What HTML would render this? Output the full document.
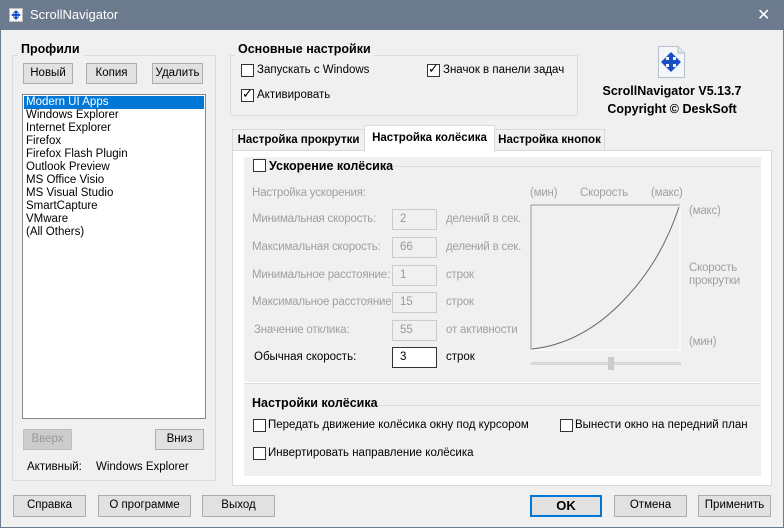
<!DOCTYPE html>
<html><head><meta charset="utf-8"><style>
*{margin:0;padding:0;box-sizing:border-box}
body{width:784px;height:528px;background:#f0f0f0;font-family:"Liberation Sans",sans-serif;font-size:11.5px;color:#000;position:relative;overflow:hidden}
.a{position:absolute;white-space:nowrap}
.b{position:absolute;background:#e1e1e1;border:1px solid #adadad;text-align:center;line-height:19px;font-size:11.5px}
.g{color:#a0a0a0;letter-spacing:-0.2px}
.cb{position:absolute;width:13px;height:13px;border:1px solid #333;background:#fff}
.inp{position:absolute;width:45px;height:21px;border:1px solid #ccc;background:#f0f0f0;color:#999;padding-left:7px;line-height:19px}
.bold{font-weight:bold}
.gl{position:absolute;height:1px;background:#dcdcdc}
</style></head><body>
<div class="a" style="left:0;top:0;width:784px;height:30px;background:#6b7a8c"></div>
<div class="a" style="left:0;top:0;width:784px;height:528px;border:1px solid #6b7a8c"></div>
<svg class="a" style="left:9px;top:8px" width="14" height="14"><rect x="0.5" y="0.5" width="13" height="13" fill="#fff" stroke="#bbb"/><path d="M7 2L10 5H8V6H9V5L12 7L9 9V8H8V9H10L7 12L4 9H6V8H5V9L2 7L5 5V6H6V5H4Z" fill="#1a52c8"/></svg>
<div class="a" style="left:30px;top:7px;color:#fff;font-size:13px">ScrollNavigator</div>
<div class="a" style="left:757px;top:5px;color:#fff;font-size:16px">✕</div>

<!-- Profiles -->
<div class="a" style="left:12px;top:55px;width:204px;height:426px;border:1px solid #dcdcdc"></div>
<div class="a bold" style="left:18px;top:42px;background:#f0f0f0;padding:0 3px;font-size:12.5px">Профили</div>
<div class="b" style="left:23px;top:63px;width:50px;height:21px">Новый</div>
<div class="b" style="left:86px;top:63px;width:51px;height:21px">Копия</div>
<div class="b" style="left:152px;top:63px;width:51px;height:21px">Удалить</div>
<div class="a" style="left:22px;top:94px;width:184px;height:325px;background:#fff;border:1px solid #828790"></div>
<div class="a" style="left:24px;top:96px;width:180px;height:13px;background:#0078d7"></div>
<div class="a" style="left:26px;top:96px;font-size:11.5px;line-height:13px">
<div style="color:#fff">Modern UI Apps</div><div>Windows Explorer</div><div>Internet Explorer</div><div>Firefox</div><div>Firefox Flash Plugin</div><div>Outlook Preview</div><div>MS Office Visio</div><div>MS Visual Studio</div><div>SmartCapture</div><div>VMware</div><div>(All Others)</div></div>
<div class="b" style="left:23px;top:429px;width:49px;height:21px;background:#ccc;border-color:#bfbfbf;color:#999">Вверх</div>
<div class="b" style="left:155px;top:429px;width:49px;height:21px">Вниз</div>
<div class="a" style="left:27px;top:461px">Активный:</div>
<div class="a" style="left:96px;top:461px">Windows Explorer</div>

<!-- bottom buttons -->
<div class="b" style="left:13px;top:495px;width:73px;height:22px">Справка</div>
<div class="b" style="left:98px;top:495px;width:93px;height:22px">О программе</div>
<div class="b" style="left:202px;top:495px;width:73px;height:22px">Выход</div>
<div class="b bold" style="left:530px;top:495px;width:72px;height:22px;border:2px solid #0078d7;line-height:18px;font-size:13px">OK</div>
<div class="b" style="left:614px;top:495px;width:73px;height:22px">Отмена</div>
<div class="b" style="left:698px;top:495px;width:73px;height:22px">Применить</div>

<!-- main settings -->
<div class="a" style="left:230px;top:55px;width:348px;height:61px;border:1px solid #dcdcdc"></div>
<div class="a bold" style="left:235px;top:42px;background:#f0f0f0;padding:0 3px;font-size:12.5px">Основные настройки</div>
<div class="cb" style="left:241px;top:64px"></div><div class="a" style="left:257px;top:64px">Запускать с Windows</div>
<div class="cb" style="left:241px;top:89px"></div><div class="a" style="left:242px;top:86px;font-size:13px">✓</div><div class="a" style="left:257px;top:89px">Активировать</div>
<div class="cb" style="left:427px;top:64px"></div><div class="a" style="left:428px;top:61px;font-size:13px">✓</div><div class="a" style="left:443px;top:64px">Значок в панели задач</div>

<!-- logo -->
<svg class="a" style="left:656px;top:46px" width="30" height="32"><path d="M2.5 0.5H22L28.5 7V31.5H2.5Z" fill="#f4f6fb" stroke="#b8bfcc"/><path d="M22 0.5V7H28.5" fill="#e0e4ec" stroke="#b8bfcc"/><path d="M15 6L20 11H17V14H20V11L25 16L20 21V18H17V21H20L15 26L10 21H13V18H10V21L5 16L10 11V14H13V11H10Z" fill="#1a4fc4"/></svg>
<div class="a bold" style="left:566px;top:82px;width:212px;text-align:center;line-height:18px;font-size:12.5px">ScrollNavigator V5.13.7<br>Copyright © DeskSoft</div>

<!-- tabs -->
<div class="a" style="left:232px;top:150px;width:540px;height:336px;background:#fff;border:1px solid #d9d9d9"></div>
<div class="a bold" style="left:232px;top:129px;width:133px;height:22px;border:1px solid #d9d9d9;border-bottom:none;line-height:21px;text-align:center">Настройка прокрутки</div>
<div class="a" style="left:364px;top:125px;width:131px;height:27px;background:#fff;border:1px solid #d9d9d9;border-bottom:none;line-height:24px;text-align:center;font-weight:bold">Настройка колёсика</div>
<div class="a bold" style="left:494px;top:129px;width:111px;height:22px;border:1px solid #d9d9d9;border-bottom:none;line-height:21px;text-align:center">Настройка кнопок</div>

<div class="a" style="left:244px;top:157px;width:517px;height:225px;background:#f0f0f0"></div>
<div class="a" style="left:244px;top:383px;width:517px;height:93px;background:#f0f0f0;border-top:1px solid #dcdcdc"></div>
<div class="gl" style="left:375px;top:166px;width:386px"></div>
<div class="cb" style="left:253px;top:159px"></div>
<div class="a bold" style="left:269px;top:159px;font-size:12.5px">Ускорение колёсика</div>
<div class="a g" style="left:252px;top:187px">Настройка ускорения:</div>
<div class="a g" style="left:252px;top:213px">Минимальная скорость:</div>
<div class="a g" style="left:252px;top:241px">Максимальная скорость:</div>
<div class="a g" style="left:252px;top:269px">Минимальное расстояние:</div>
<div class="a g" style="left:252px;top:296px">Максимальное расстояние:</div>
<div class="a g" style="left:254px;top:324px">Значение отклика:</div>
<div class="a" style="left:254px;top:351px">Обычная скорость:</div>
<div class="inp" style="left:392px;top:209px">2</div>
<div class="inp" style="left:392px;top:237px">66</div>
<div class="inp" style="left:392px;top:265px">1</div>
<div class="inp" style="left:392px;top:292px">15</div>
<div class="inp" style="left:392px;top:320px">55</div>
<div class="inp" style="left:392px;top:347px;background:#fff;border-color:#333;color:#000">3</div>
<div class="a g" style="left:446px;top:213px">делений в сек.</div>
<div class="a g" style="left:446px;top:241px">делений в сек.</div>
<div class="a g" style="left:446px;top:269px">строк</div>
<div class="a g" style="left:446px;top:296px">строк</div>
<div class="a g" style="left:446px;top:324px">от активности</div>
<div class="a" style="left:446px;top:351px">строк</div>

<div class="a g" style="left:530px;top:187px">(мин)</div>
<div class="a g" style="left:580px;top:187px">Скорость</div>
<div class="a g" style="left:651px;top:187px">(макс)</div>
<div class="a g" style="left:689px;top:205px">(макс)</div>
<div class="a g" style="left:689px;top:262px;line-height:13px">Скорость<br>прокрутки</div>
<div class="a g" style="left:689px;top:336px">(мин)</div>
<svg class="a" style="left:530px;top:204px" width="152" height="148"><rect x="1" y="1" width="149" height="145" fill="none" stroke="#fff"/><path d="M1 1V146M1 1H150" stroke="#999"/><path d="M2 145C30 142 60 130 90 100C115 75 135 45 149 3" fill="none" stroke="#666"/></svg>
<div class="a" style="left:531px;top:362px;width:150px;height:3px;background:#e0e0e0;border:1px solid #d4d4d4"></div>
<div class="a" style="left:608px;top:357px;width:6px;height:13px;background:#ccc"></div>

<div class="gl" style="left:375px;top:405px;width:386px"></div>
<div class="a bold" style="left:252px;top:396px;font-size:12.5px">Настройки колёсика</div>
<div class="cb" style="left:253px;top:419px"></div><div class="a" style="left:268px;top:419px">Передать движение колёсика окну под курсором</div>
<div class="cb" style="left:560px;top:419px"></div><div class="a" style="left:575px;top:419px">Вынести окно на передний план</div>
<div class="cb" style="left:253px;top:447px"></div><div class="a" style="left:268px;top:447px">Инвертировать направление колёсика</div>
</body></html>
